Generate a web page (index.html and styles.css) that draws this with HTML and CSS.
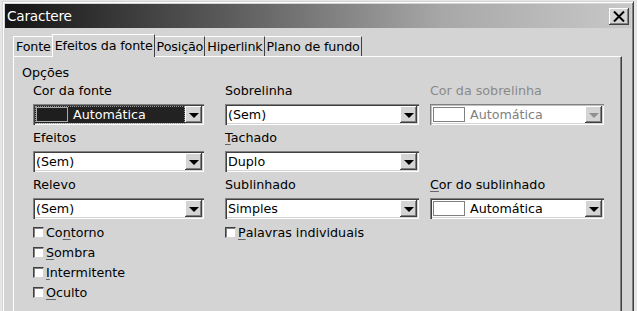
FILE: index.html
```html
<!DOCTYPE html>
<html lang="pt">
<head>
<meta charset="utf-8">
<title>Caractere</title>
<link rel="stylesheet" href="styles.css">
</head>
<body>
<div class="window">
  <div class="titlebar">
    <span class="title">Caractere</span>
    <span class="close">
      <svg width="12" height="11" viewBox="0 0 12 11"><path d="M1 0.5 L11 10.5 M11 0.5 L1 10.5" stroke="#000" stroke-width="2"/></svg>
    </span>
  </div>
  <div class="client">
    <div class="tabs">
      <div class="tab first">Fonte</div>
      <div class="tab active">Efeitos da fonte</div>
      <div class="tab">Posição</div>
      <div class="tab">Hiperlink</div>
      <div class="tab">Plano de fundo</div>
    </div>
    <div class="panel">
      <div class="group-title">Opções</div>
      <div class="grid">
        <div class="field">
          <div class="label">Cor da fonte</div>
          <div class="combo dark w1">
            <span class="value"><span class="swatch dark-swatch"></span>Automática</span>
            <span class="btn"><span class="tri"></span></span>
          </div>
        </div>
        <div class="field">
          <div class="label">Sobrelinha</div>
          <div class="combo w2">
            <span class="value">(Sem)</span>
            <span class="btn"><span class="tri"></span></span>
          </div>
        </div>
        <div class="field">
          <div class="label disabled">Cor da sobrelinha</div>
          <div class="combo w3 off">
            <span class="value"><span class="swatch"></span>Automática</span>
            <span class="btn"><span class="tri"></span></span>
          </div>
        </div>

        <div class="field">
          <div class="label">Efeitos</div>
          <div class="combo w1">
            <span class="value">(Sem)</span>
            <span class="btn"><span class="tri"></span></span>
          </div>
        </div>
        <div class="field">
          <div class="label"><u>T</u>achado</div>
          <div class="combo w2">
            <span class="value">Duplo</span>
            <span class="btn"><span class="tri"></span></span>
          </div>
        </div>
        <div class="field"></div>

        <div class="field">
          <div class="label">Relevo</div>
          <div class="combo w1">
            <span class="value">(Sem)</span>
            <span class="btn"><span class="tri"></span></span>
          </div>
        </div>
        <div class="field">
          <div class="label">Sublinhado</div>
          <div class="combo w2">
            <span class="value">Simples</span>
            <span class="btn"><span class="tri"></span></span>
          </div>
        </div>
        <div class="field">
          <div class="label"><u>C</u>or do sublinhado</div>
          <div class="combo w3">
            <span class="value"><span class="swatch"></span>Automática</span>
            <span class="btn"><span class="tri"></span></span>
          </div>
        </div>

        <div class="checks">
          <div class="check"><span class="box"></span>Co<u>n</u>torno</div>
          <div class="check"><span class="box"></span><u>S</u>ombra</div>
          <div class="check"><span class="box"></span><u>I</u>ntermitente</div>
          <div class="check"><span class="box"></span><u>O</u>culto</div>
        </div>
        <div class="checks">
          <div class="check"><span class="box"></span><u>P</u>alavras individuais</div>
        </div>
      </div>
    </div>
  </div>
</div>
</body>
</html>
```
FILE: styles.css
```css
* { box-sizing: border-box; }
html, body { margin: 0; padding: 0; }
body {
  background: #e6e6e6;
  font-family: "DejaVu Sans", Verdana, sans-serif;
  font-size: 12.7px;
  color: #000;
  width: 637px;
  height: 311px;
  overflow: hidden;
}
.window {
  margin: 1px 0 0 2px;
  width: 632px;
  height: 320px;
  background: #d4d4d4;
  border-top: 1px solid #d4d4d4;
  border-left: 1px solid #d4d4d4;
  border-right: 1px solid #404040;
  box-shadow: inset 1px 1px 0 #fff, inset -1px 0 0 #808080;
  padding: 2px 2px 0 2px;
}
.titlebar {
  height: 24px;
  background: linear-gradient(to right, #141414 0%, #5a5a5a 35%, #a8a8a8 70%, #c8c8c8 100%);
  display: flex;
  align-items: center;
  justify-content: space-between;
  padding: 0 2px 0 2px;
}
.title {
  color: #fff;
  font-size: 13.6px;
  letter-spacing: -0.2px;
}
.close {
  width: 20px;
  height: 17px;
  background: #d4d4d4;
  box-shadow: inset -1px -1px 0 #404040, inset 1px 1px 0 #fff, inset -2px -2px 0 #808080;
  display: flex;
  align-items: center;
  justify-content: center;
}
.client {
  padding: 6px 0 0 8px;
}
.tabs {
  display: flex;
  height: 22px;
  align-items: flex-end;
}
.tab {
  height: 20px;
  padding: 2px 1px 0 2px;
  line-height: 16px;
  border-top: 1px solid #fff;
  border-right: 1px solid #404040;
  letter-spacing: -0.14px;
}
.tab.first {
  border-left: 1px solid #fff;
}
.tab.active {
  border-left: 1px solid #fff;
  padding: 3px 1px 0 2px;
  margin-left: -1px;
  position: relative;
  z-index: 1;
  background: #d4d4d4;
  margin-bottom: -1px;
  height: 23px;
}
.panel {
  width: 609px;
  height: 270px;
  border-top: 1px solid #fff;
  border-left: 1px solid #fff;
  border-right: 1px solid #404040;
  box-shadow: inset -1px 0 0 #808080;
  padding: 8px 0 0 8px;
}
.group-title {
  line-height: 16px;
}
.grid {
  margin: 2px 0 0 11px;
  display: grid;
  grid-template-columns: 192px 205px 174px;
  row-gap: 5px;
}
.field { min-height: 42px; }
.label {
  line-height: 16px;
  margin-bottom: 5px;
}
.label.disabled { color: #8a8a8a; }
u { text-decoration-color: #666; text-underline-offset: 2px; }
.combo {
  height: 21px;
  background: #fff;
  display: flex;
  align-items: center;
  justify-content: space-between;
  padding: 2px 2px 2px 3px;
  box-shadow: inset 1px 1px 0 #808080, inset 2px 2px 0 #404040, inset -1px -1px 0 #fff, inset -2px -2px 0 #d4d4d4;
}
.w1 { width: 171px; }
.w2 { width: 194px; }
.w3 { width: 174px; }
.value {
  display: flex;
  align-items: center;
  line-height: 16px;
}
.swatch {
  width: 32px;
  height: 15px;
  border: 1px solid #808080;
  background: #fff;
  margin-right: 5px;
}
.combo.dark {
  background: #222;
  color: #fff;
}
.combo.dark .value {
  outline: 1px dotted #999;
  outline-offset: 0;
  flex: 1;
  margin-right: 1px;
}
.dark-swatch {
  background: #1e1e1e;
  border-color: #aaa;
}
.combo.off { color: #808080; box-shadow: inset 1px 1px 0 #808080, inset 2px 2px 0 #c0c0c0, inset -1px -1px 0 #fff, inset -2px -2px 0 #d4d4d4; }
.btn {
  width: 17px;
  height: 17px;
  background: #d4d4d4;
  box-shadow: inset -1px -1px 0 #404040, inset 1px 1px 0 #fff, inset -2px -2px 0 #808080;
  display: flex;
  align-items: center;
  justify-content: center;
  flex: none;
}
.tri {
  width: 0;
  height: 0;
  border-left: 5px solid transparent;
  border-right: 5px solid transparent;
  border-top: 5px solid #000;
  margin-top: 1px;
}
.combo.off .tri { border-top-color: #909090; }
.checks {
  margin-top: -2px;
}
.check {
  height: 20px;
  display: flex;
  align-items: center;
}
.box {
  width: 11px;
  height: 11px;
  background: #fff;
  border-top: 1px solid #404040;
  border-left: 1px solid #404040;
  border-right: 1px solid #d4d4d4;
  border-bottom: 1px solid #d4d4d4;
  box-shadow: inset 1px 1px 0 #808080;
  margin-right: 2px;
}
```
